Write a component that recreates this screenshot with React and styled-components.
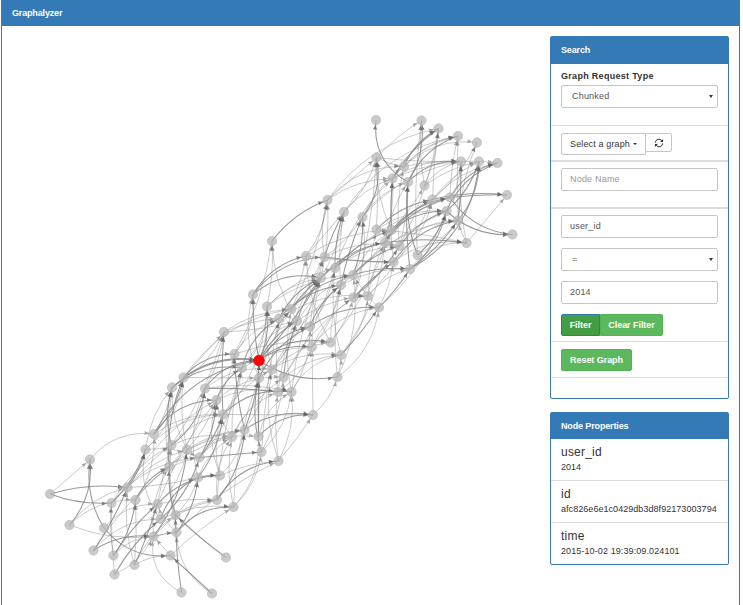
import React from 'react';
import styled, { createGlobalStyle } from 'styled-components';

const GlobalStyle = createGlobalStyle`
  * { box-sizing: border-box; }
  html, body { margin: 0; background: #fff; overflow: hidden; }
  body { font: 9px/13px "Liberation Sans", Arial, sans-serif; color: #333; letter-spacing: 0.08px; }
`;

const Page = styled.main`
  width: 739px;
  height: 605px;
  margin-left: 1px;
  border: solid #337ab7;
  border-width: 0 1px;
  display: flex;
  flex-direction: column;
`;
const TopBar = styled.header`
  height: 26px;
  flex: none;
  padding-left: 10px;
  line-height: 26px;
  background: #337ab7;
  color: #fff;
  font-weight: bold;
  letter-spacing: -0.16px;
`;
const Content = styled.div`
  display: flex;
  flex: 1;
  min-height: 0;
`;
const GraphArea = styled.section`
  width: 548px;
  height: 579px;
  flex: none;
`;
const Sidebar = styled.aside`
  width: 179px;
  padding-top: 10px;
  display: flex;
  flex-direction: column;
  gap: 13px;
`;
const Panel = styled.section`
  height: ${(p) => p.$height}px;
  border: 1px solid #337ab7;
  border-radius: 2px;
`;
const PanelTitle = styled.h3`
  margin: 0;
  height: ${(p) => p.$height}px;
  padding-left: 10px;
  font-size: 9px;
  line-height: 27px;
  letter-spacing: -0.14px;
  background: #337ab7;
  color: #fff;
`;
const Section = styled.div`
  height: ${(p) => p.$height}px;
  padding: ${(p) => p.$top ?? 7}px 10px 0;
  border-bottom: ${(p) => p.$line ?? 1}px solid #ddd;
`;
const Label = styled.label`
  display: block;
  height: 15px;
  font-weight: bold;
  letter-spacing: 0.3px;
`;
const Control = styled.div`
  width: 157px;
  height: 23px;
  padding: 0 4px 0 ${(p) => p.$indent ?? 8}px;
  border: 1px solid #c6c6c6;
  border-radius: 2px;
  display: flex;
  align-items: center;
  justify-content: space-between;
  color: ${(p) => (p.$placeholder ? '#999' : '#555')};
  letter-spacing: 0.2px;
`;
const Fields = styled.div`
  display: flex;
  flex-direction: column;
  gap: 10px;
`;
const Caret = styled.i`
  border: solid transparent;
  border-width: ${(p) => (p.$tall ? 3 : 2)}px 2px 0;
  border-top-color: #333;
`;
const ButtonRow = styled.div`
  display: flex;
  align-items: flex-start;
`;
const DropButton = styled.button`
  width: 85px;
  height: 22px;
  padding: 0 0 0 8px;
  display: flex;
  align-items: center;
  gap: 3px;
  font: inherit;
  letter-spacing: 0.14px;
  white-space: nowrap;
  color: #333;
  background: #fff;
  border: 1px solid #c6c6c6;
  border-radius: 2px 0 0 2px;
`;
const RefreshButton = styled.button`
  width: 27px;
  height: 19px;
  margin-left: -1px;
  padding: 0;
  display: grid;
  place-items: center;
  background: #fff;
  border: 1px solid #c6c6c6;
  border-radius: 0 2px 2px 0;
`;
const GreenButton = styled.button`
  width: ${(p) => p.$width}px;
  height: 22px;
  padding: 0;
  font: bold 9px "Liberation Sans", Arial, sans-serif;
  letter-spacing: -0.05px;
  white-space: nowrap;
  color: #fff;
  background: ${(p) => (p.$active ? '#449d44' : '#5cb85c')};
  border: 1px solid ${(p) => (p.$active ? '#2e75ad' : '#53b453')};
  border-radius: ${(p) => p.$radius ?? '2px'};
`;
const Property = styled.div`
  height: 42px;
  padding: 6px 10px 0;
  border-bottom: 1px solid #ddd;
  &:last-child { border-bottom: 0; }
`;
const PropertyName = styled.h4`
  margin: 0;
  font-size: 12px;
  font-weight: normal;
  line-height: 14px;
  letter-spacing: 0.22px;
`;
const PropertyValue = styled.p`
  margin: 1px 0 0;
  line-height: 14px;
  white-space: nowrap;
  letter-spacing: ${(p) => p.$spacing}px;
`;

const nodes = [
  [376,120],[421.5,120.5],[438.5,128.5],[458,136],[477,142.5],[376.5,157.5],[461,161.5],[479,161.5],[497.5,163],[404,166.5],
  [392.5,178.5],[408,182],[424.5,185.5],[432.5,199.5],[450,197.5],[507,195],[446.5,211],[512.5,234.5],[458,220.5],[466.5,243],
  [362.5,217],[376.5,229.5],[391.5,230],[385,242.5],[399.5,246],[417.5,255],[393.5,262],[410,269],[353,275],[327.5,200],
  [344,212],[272,241],[306,256],[324.5,257],[335,268],[321,278],[341,285],[353.5,297.5],[368,296],[379,307.5],
  [253,294.5],[267,306.5],[291.5,309],[279,318.5],[297,321],[310,326.5],[330.5,342.5],[312,347],[341,355],[337.5,377],
  [224,332],[234.5,354],[259,360.5],[242,368],[272,369.5],[259,378],[283.5,377.5],[183.5,377.5],[172,387.5],[205,388.5],
  [216.5,400],[278,392],[291.5,392],[223,414.5],[313,415],[154,434],[171.5,445],[187,449.5],[244.5,430],[232,437],
  [258.5,436.5],[261.5,452],[278.5,461],[145.5,449.5],[199.5,457.5],[169.5,466.5],[198,477.5],[220,475.5],[217,500],[233.5,507],
  [157.5,504],[175.5,515],[160.5,519],[176.5,532.5],[153.5,536.5],[170.5,555.5],[226,557.5],[181.5,592.5],[212,593.5],[90,459.5],
  [50,494],[127.5,487.5],[111.5,503],[135.5,500],[69.5,525],[104,528],[93.5,550.5],[113.5,555.5],[134.5,565],[114.5,574.5],
];
const SELECTED = 52;

// Each entry is "source: target/bend"; a trailing * marks a heavy edge.
// Bend is the curve's offset to the left of its direction, as a share of its length.
const links = `
90: 89/0 91/.06* 92/-.06*
94: 89/-.12* 91/.1 93/.12 84/-.07
95: 89/.1* 85/-.15* 80/.13
96: 91/-.03* 84/.1* 75/.05 82/.13
97: 92/.04 93/-.08* 80/.04* 84/.12
98: 91/.06 93/-.02 80/-.02* 85/.08 81/.08
99: 92/.02 84/-.1 82/.05*
87: 84/.2 81/.02*
88: 85/0* 83/.15
86: 81/.02*
85: 84/0 79/.03
89: 65/.15
92: 73/-.07* 74/.12 66/.08
91: 73/-.06* 66/.04 67/.08 60/.08 76/-.03
93: 65/-.1 75/.1* 74/.12 69/.1
84: 75/.1 67/-.08* 83/.03* 78/.1
82: 73/.13 74/-.08* 76/.12* 79/.08
80: 66/.02 67/-.1 77/.12* 78/.04 60/.04
81: 75/.06* 76/-.08 78/.08 58/.05
83: 80/.08 76/-.08* 79/.14* 66/.05 72/.05
73: 58/.08 57/-.1 63/.12 74/.08
65: 58/-.06 57/-.08* 60/.15* 63/.1 52/.14*
66: 58/.08* 59/-.12* 63/.1 69/.09 50/-.05
67: 58/.08 60/-.06 68/.08 70/.08 57/.05
74: 60/-.07* 63/-.05* 68/.1 71/0* 53/-.09
75: 57/.07* 58/.07 59/-.1 68/.1
76: 59/.1 63/-.08* 69/.1 77/.04*
77: 63/.1 60/.1 68/-.1 72/.05
78: 69/.1 68/-.09* 72/.14* 53/.04
79: 69/.06 70/-.12 71/-.1 55/.05
57: 50/0 51/.13* 52/.12* 55/0 42/.12
58: 50/-.1 53/.12* 52/.13*
59: 50/-.06 52/.14* 54/.12 61/.02* 62/.06
60: 51/-.06 53/.1* 56/.12 61/.1
63: 50/.02* 62/.14* 64/0 54/.08 41/-.1
50: 43/.05 42/.08 44/-.03
51: 40/-.12 43/.1 46/.06 31/-.05
53: 41/-.12 43/.12* 47/.08 44/.1
52: 40/.03* 41/-.08* 42/.06* 44/.08* 45/.11* 46/.14* 47/.11* 49/-.11* 35/-.03*
54: 41/.06 44/-.08 46/.1 36/.05 35/-.06
55: 40/.1 45/.1* 48/.12 42/.05
56: 44/.04* 48/.09 37/.07 34/-.05
61: 43/.03 47/-.1 33/.06 62/.1*
62: 42/.06 45/-.09 48/.14 35/.04
68: 51/.03* 52/-.05* 64/.12* 54/-.05
69: 60/.08 61/.12 53/.05 56/.07
70: 52/0* 55/.01* 62/.13 64/.13*
71: 55/.08* 62/-.1 56/-.06 43/.02
72: 61/.04 62/-.09 64/-.02 54/.08
64: 47/0 49/-.08
49: 48/-.05 39/-.12 28/-.09 36/.05
48: 39/-.02* 38/-.1 34/.06 23/-.08
47: 36/-.08 37/.08 35/.04 39/.12
46: 37/-.06 36/.05 32/.07 22/-.05
45: 34/-.08 36/.08* 39/.1* 33/.03
44: 35/.06* 28/.1 31/.08 37/.07
43: 35/.1* 36/.1* 32/-.08 38/.1
42: 35/.05* 33/-.06 28/.1* 29/-.04
41: 31/-.04 35/.1 34/.08 28/.09
40: 32/.12* 33/.13* 35/.14*
31: 29/.08*
32: 29/-.08 30/0 22/.08 26/-.02
33: 30/.03* 20/-.06 26/-.02* 29/.07 24/.1
34: 30/.05* 23/.08* 22/.08* 10/.07
35: 30/-.06 23/.1* 24/.1 29/-.04 14/.06
36: 20/.03* 22/-.06 27/.08 30/.04 16/.05
37: 20/-.08 24/-.05* 26/.03* 5/-.03 38/.02*
38: 21/.03 23/.04 27/.1 13/-.05
39: 28/.04 26/-.05 27/-.03* 16/-.07
28: 20/-.06* 22/.08 27/.06* 24/.08* 18/.11
29: 5/0 9/.13 10/.09 2/.11
30: 5/-.08 10/.08 3/.12
20: 5/-.13* 11/.1 9/.07 6/.1
21: 5/-.02 16/.1 13/.09* 19/.02
22: 10/.02* 12/-.04 16/.1* 14/.1* 5/.07
23: 11/.06 13/.08* 14/.1* 19/.04* 10/-.05
24: 9/.05 11/-.04 16/.09* 18/.12 2/-.05
25: 11/.07* 16/-.08* 18/-.06 1/.03
26: 10/.03 18/.12* 13/-.1 19/.12
27: 11/.03* 16/-.1* 18/-.05* 19/.15 7/-.15*
5: 1/.04 6/-.02 9/-.06
9: 2/.1* 3/.1 6/.04 4/.13
10: 3/.1 2/.06* 6/.1 8/.08
11: 0/.18* 1/-.1* 3/.12* 6/.13*
12: 1/.04 2/-.05 6/.1 7/.06
13: 2/.02 4/-.06 8/.1 7/.07 15/.05*
14: 3/.03 8/.12* 17/-.13* 15/.02*
16: 7/-.08* 8/.12* 6/-.06 17/-.12*
18: 6/-.02* 7/-.1* 3/.01 4/.04
19: 18/.04 6/.04 15/0
`.trim().split('\n').flatMap((row) => {
  const [source, targets] = row.split(': ');
  return targets.split(' ').map((item) => {
    const [target, bend] = item.split('/');
    return { from: nodes[+source], to: nodes[+target], bend: parseFloat(bend), heavy: item.endsWith('*') };
  });
});

function Link({ from, to, bend, heavy }) {
  const dx = to[0] - from[0];
  const dy = to[1] - from[1];
  const cx = from[0] + dx / 2 + dy * bend * 1.8;
  const cy = from[1] + dy / 2 - dx * bend * 1.8;
  const angle = Math.atan2(to[1] - cy, to[0] - cx);
  const tipX = to[0] - Math.cos(angle) * 4.8;
  const tipY = to[1] - Math.sin(angle) * 4.8;
  return (
    <g opacity={heavy ? 0.85 : 0.58}>
      <path d={`M${from} Q${cx},${cy} ${to}`} fill="none" stroke="#888" strokeWidth={heavy ? 1.05 : 0.75} />
      <path
        d="M0 0L-5 2L-4.4 0L-5 -2Z"
        fill="#626262"
        transform={`translate(${tipX} ${tipY}) rotate(${(angle * 180) / Math.PI})`}
      />
    </g>
  );
}

function Graph() {
  return (
    <svg width="548" height="579" viewBox="2 26 548 579" role="img" aria-label="Node graph">
      {links.map((link, i) => <Link key={i} {...link} />)}
      {nodes.map(([x, y], i) => (
        <circle
          key={i}
          cx={x}
          cy={y}
          r={i === SELECTED ? 5.4 : 4.7}
          fill={i === SELECTED ? '#f00' : '#b8b8b8'}
          stroke={i === SELECTED ? '#f00' : '#a4a4a4'}
          strokeWidth="0.6"
          opacity={i === SELECTED ? 1 : 0.74}
        />
      ))}
    </svg>
  );
}

function RefreshIcon() {
  return (
    <svg width="10" height="10" viewBox="0 0 10 10" fill="none" stroke="#333" strokeWidth="1">
      <path d="M1.3 4.6A3.6 3.6 0 0 1 7.8 2.7M8.7 5.4A3.6 3.6 0 0 1 2.2 7.3" />
      <path d="M9.1 1V4H6.1ZM.9 9V6H3.9Z" fill="#333" stroke="none" />
    </svg>
  );
}

const properties = [
  ['user_id', '2014', 0],
  ['id', 'afc826e6e1c0429db3d8f92173003794', 0.05],
  ['time', '2015-10-02 19:39:09.024101', 0.1],
];

export default function App() {
  return (
    <>
      <GlobalStyle />
      <Page>
        <TopBar>Graphalyzer</TopBar>
        <Content>
          <GraphArea><Graph /></GraphArea>
          <Sidebar>
            <Panel $height={363}>
              <PanelTitle $height={27}>Search</PanelTitle>
              <Section $height={62} $top={6}>
                <Label>Graph Request Type</Label>
                <Control $indent={10}>Chunked<Caret $tall /></Control>
              </Section>
              <Section $height={36} $line={2}>
                <ButtonRow>
                  <DropButton>Select a graph<Caret /></DropButton>
                  <RefreshButton aria-label="Refresh"><RefreshIcon /></RefreshButton>
                </ButtonRow>
              </Section>
              <Section $height={47} $line={2} $top={6}>
                <Control $placeholder>Node Name</Control>
              </Section>
              <Section $height={133} $top={6}>
                <Fields>
                  <Control>user_id</Control>
                  <Control $indent={10}>=<Caret $tall /></Control>
                  <Control>2014</Control>
                  <ButtonRow>
                    <GreenButton $width={39} $active $radius="2px 0 0 2px">Filter</GreenButton>
                    <GreenButton $width={63} $radius="0 2px 2px 0">Clear Filter</GreenButton>
                  </ButtonRow>
                </Fields>
              </Section>
              <Section $height={36}>
                <GreenButton $width={71}>Reset Graph</GreenButton>
              </Section>
            </Panel>
            <Panel $height={153}>
              <PanelTitle $height={26}>Node Properties</PanelTitle>
              {properties.map(([name, value, spacing]) => (
                <Property key={name}>
                  <PropertyName>{name}</PropertyName>
                  <PropertyValue $spacing={spacing}>{value}</PropertyValue>
                </Property>
              ))}
            </Panel>
          </Sidebar>
        </Content>
      </Page>
    </>
  );
}
